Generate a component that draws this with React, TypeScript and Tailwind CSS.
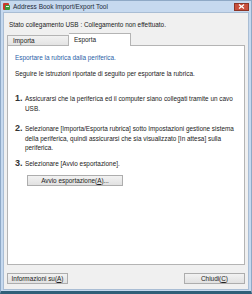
import React from 'react';

const font = { fontFamily: '"Liberation Sans", Arial, sans-serif' };

const Step: React.FC<{ n: string; children: React.ReactNode }> = ({ n, children }) => (
  <div className="flex items-start">
    <span className="w-[10px] shrink-0 text-[9px] font-bold leading-[9px] text-[#333]">{n}</span>
    <div className="leading-[9.5px]">{children}</div>
  </div>
);

const btn =
  'h-[11px] border border-[#adadad] bg-gradient-to-b from-[#f2f2f2] to-[#e1e1e1] flex items-center justify-center text-[6.4px] text-[#222]';

const App: React.FC = () => {
  return (
    <div
      className="w-[252px] h-[294px] flex flex-col bg-[#c6d9ef] border border-[#8fa9c6] border-b-[3px] border-b-[#2f5f78] text-[6.4px] text-[#222]"
      style={font}
    >
      {/* title bar */}
      <div className="h-[11px] flex items-center pl-[1px]">
        <svg width="9" height="9" viewBox="0 0 9 9" className="shrink-0">
          <rect x="1" y="1" width="6" height="7" rx="1" fill="#c8392b" />
          <rect x="3" y="3" width="5" height="5" rx="1" fill="#3a9a3a" />
          <rect x="4" y="4" width="3" height="1" fill="#e8f3e8" />
        </svg>
        <span className="ml-[2px] text-[6.5px] text-[#1e2a3a]">Address Book Import/Export Tool</span>
        <div className="ml-auto mr-[2px] w-[15px] h-[8px] bg-[#c9503d] border border-[#8d3527] flex items-center justify-center">
          <svg width="7" height="5" viewBox="0 0 7 5">
            <path d="M1 0.5 L6 4.5 M6 0.5 L1 4.5" stroke="#fff" strokeWidth="1.3" />
          </svg>
        </div>
      </div>

      {/* client area */}
      <div className="flex-1 mx-[2px] mb-[1px] bg-[#f0f0f0] border border-[#a9bdd4] flex flex-col px-[3px]">
        <div className="pt-[7px] pl-[2px] h-[19px]">Stato collegamento USB : Collegamento non effettuato.</div>

        {/* tabs */}
        <div className="flex items-end h-[13px]">
          <div className="w-[62px] h-[10px] border border-[#b4b4b4] border-b-0 bg-gradient-to-b from-[#f2f2f2] to-[#e3e3e3] pl-[5px] flex items-center">
            Importa
          </div>
          <div className="w-[62px] h-[13px] border border-[#b4b4b4] border-b-0 border-l-0 bg-white pl-[5px] pt-[1px] -mb-px relative z-10">
            Esporta
          </div>
        </div>

        {/* panel */}
        <div className="flex-1 bg-white border border-[#b4b4b4] pl-[7px] pr-[10px]">
          <div className="mt-[7px] text-[#2b5fa8]">Esportare la rubrica dalla periferica.</div>
          <div className="mt-[6px]">Seguire le istruzioni riportate di seguito per esportare la rubrica.</div>

          <div className="mt-[16px]">
            <Step n="1.">
              Assicurarsi che la periferica ed il computer siano collegati tramite un cavo USB.
            </Step>
          </div>
          <div className="mt-[11px]">
            <Step n="2.">
              Selezionare [Importa/Esporta rubrica] sotto Impostazioni gestione sistema della periferica, quindi assicurarsi che sia visualizzato [In attesa] sulla periferica.
            </Step>
          </div>
          <div className="mt-[6px]">
            <Step n="3.">Selezionare [Avvio esportazione].</Step>
          </div>
          <button className={`${btn} mt-[7px] ml-[12px] w-[96px]`}>
            Avvio esportazione(<span className="underline">A</span>)...
          </button>
        </div>

        {/* bottom buttons */}
        <div className="h-[24px] pt-[8px] flex items-start justify-between">
          <button className={`${btn} w-[61px]`}>
            Informazioni su(<span className="underline">A</span>)
          </button>
          <button className={`${btn} w-[61px]`}>
            Chiudi(<span className="underline">C</span>)
          </button>
        </div>
      </div>
    </div>
  );
};

export default App;
